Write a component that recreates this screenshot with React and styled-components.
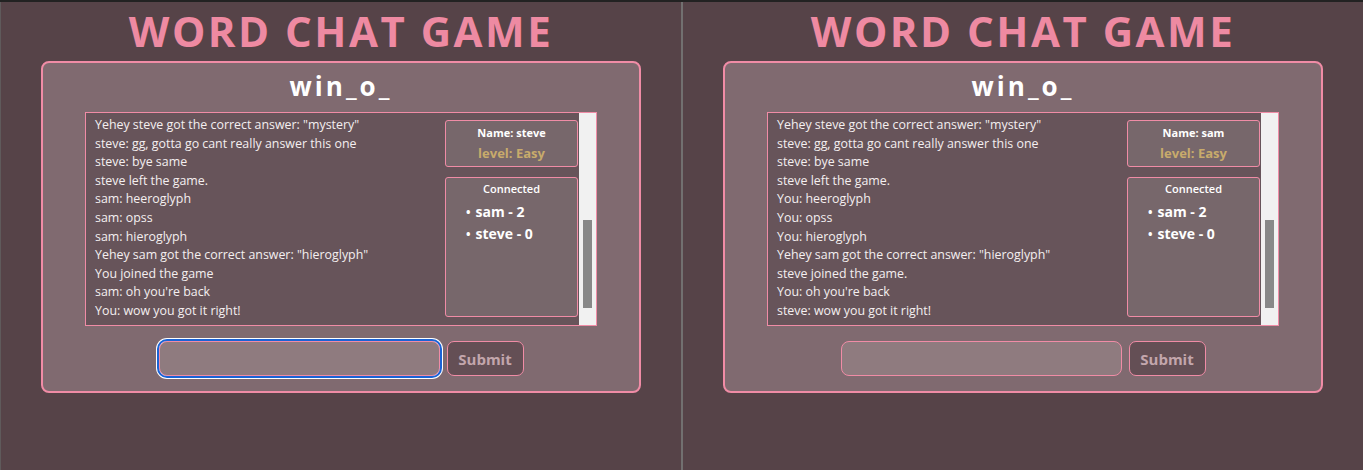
import styled, { createGlobalStyle } from "styled-components";

const GlobalStyle = createGlobalStyle`
  html, body {
    margin: 0;
    padding: 0;
    background-color: #564348;
  }
  body {
    font-family: "Open Sans", "Noto Sans", sans-serif;
    overflow: hidden;
  }
`;

const Screen = styled.div`
  width: 1363px;
  height: 470px;
  display: flex;
  flex-direction: column;
  background-color: #564348;
`;

const TopBar = styled.div`
  height: 2px;
  background-color: #222;
`;

const Windows = styled.div`
  flex: 1;
  display: flex;
`;

const EdgeLine = styled.div`
  width: ${(p) => p.$w}px;
  background-color: ${(p) => p.$color};
`;

const Pane = styled.div`
  flex: 1;
  display: flex;
  flex-direction: column;
  align-items: center;
`;

const Title = styled.h1`
  margin: 1px 0 2px;
  font-size: 42px;
  line-height: 56px;
  font-weight: 700;
  letter-spacing: 2.5px;
  color: #ee8aa2;
`;

const Card = styled.div`
  box-sizing: border-box;
  width: 600px;
  padding: 6px 0 15px;
  display: flex;
  flex-direction: column;
  align-items: center;
  background-color: #806a70;
  border: 2px solid #f08ca6;
  border-radius: 8px;
`;

const RoomName = styled.h2`
  margin: 0 0 9px;
  font-size: 26px;
  line-height: 34px;
  font-weight: 700;
  letter-spacing: 3px;
  color: #fff;
`;

const ChatBox = styled.div`
  box-sizing: border-box;
  width: 512px;
  height: 214px;
  display: flex;
  background-color: #67545a;
  border: 1px solid #f08ca6;
`;

const Messages = styled.div`
  flex: 1;
  padding: 3px 9px 0;
  overflow: hidden;
`;

const Message = styled.div`
  font-size: 12.4px;
  line-height: 18.6px;
  color: #f4eff0;
  white-space: nowrap;
`;

const Sidebar = styled.div`
  width: 133px;
  padding: 7px 0 8px;
  margin-right: 1px;
  display: flex;
  flex-direction: column;
  gap: 10px;
`;

const InfoBox = styled.div`
  box-sizing: border-box;
  height: ${(p) => (p.$grow ? "auto" : "47px")};
  flex: ${(p) => (p.$grow ? 1 : "none")};
  padding: ${(p) => (p.$grow ? "2px 0 0" : "3px 0 0")};
  background-color: #77676b;
  border: 1px solid #f08ca6;
  border-radius: 3px;
  text-align: center;
`;

const SmallLabel = styled.div`
  font-size: 11px;
  line-height: 17px;
  font-weight: ${(p) => (p.$bold ? 700 : 600)};
  color: #fff;
`;

const Level = styled.div`
  font-size: 13px;
  line-height: 24px;
  font-weight: 700;
  color: #c8ab6b;
`;

const PlayerList = styled.ul`
  margin: 4px 0 0;
  padding: 0 0 0 20px;
  list-style: none;
  text-align: left;

  li {
    font-size: 14px;
    line-height: 21px;
    font-weight: 700;
    color: #fff;
  }
  li::before {
    content: "•";
    font-size: 12px;
    margin-right: 5px;
  }
`;

const ScrollTrack = styled.div`
  width: 17px;
  padding-bottom: 17px;
  box-sizing: border-box;
  display: flex;
  flex-direction: column;
  justify-content: flex-end;
  align-items: center;
  background-color: #f1f1f1;
`;

const ScrollThumb = styled.div`
  width: 9px;
  height: 88px;
  background-color: #888;
`;

const InputRow = styled.div`
  margin-top: 15px;
  display: flex;
  gap: 7px;
`;

const TextInput = styled.input`
  box-sizing: border-box;
  width: 281px;
  height: 35px;
  padding: 0 10px;
  background-color: #8f7b7f;
  border: 1px solid #f08ca6;
  border-radius: 8px;
  font-family: inherit;
  font-size: 14px;
  color: #fff;
  outline: ${(p) => (p.$focused ? "2px solid #1a63d6" : "none")};
  box-shadow: ${(p) => (p.$focused ? "0 0 0 3px #ffffff" : "none")};
`;

const SubmitButton = styled.button`
  box-sizing: border-box;
  width: 77px;
  height: 35px;
  padding: 0;
  background-color: #644f55;
  border: 1px solid #f08ca6;
  border-radius: 7px;
  font-family: inherit;
  font-size: 15px;
  font-weight: 700;
  color: #c3a6ac;
`;

const players = ["sam - 2", "steve - 0"];

const leftMessages = [
  'Yehey steve got the correct answer: "mystery"',
  "steve: gg, gotta go cant really answer this one",
  "steve: bye same",
  "steve left the game.",
  "sam: heeroglyph",
  "sam: opss",
  "sam: hieroglyph",
  'Yehey sam got the correct answer: "hieroglyph"',
  "You joined the game",
  "sam: oh you're back",
  "You: wow you got it right!",
];

const rightMessages = [
  'Yehey steve got the correct answer: "mystery"',
  "steve: gg, gotta go cant really answer this one",
  "steve: bye same",
  "steve left the game.",
  "You: heeroglyph",
  "You: opss",
  "You: hieroglyph",
  'Yehey sam got the correct answer: "hieroglyph"',
  "steve joined the game.",
  "You: oh you're back",
  "steve: wow you got it right!",
];

function GameWindow({ name, messages, focused }) {
  return (
    <Pane>
      <Title>WORD CHAT GAME</Title>
      <Card>
        <RoomName>win_o_</RoomName>
        <ChatBox>
          <Messages>
            {messages.map((m, i) => (
              <Message key={i}>{m}</Message>
            ))}
          </Messages>
          <Sidebar>
            <InfoBox>
              <SmallLabel $bold>Name: {name}</SmallLabel>
              <Level>level: Easy</Level>
            </InfoBox>
            <InfoBox $grow>
              <SmallLabel>Connected</SmallLabel>
              <PlayerList>
                {players.map((p) => (
                  <li key={p}>{p}</li>
                ))}
              </PlayerList>
            </InfoBox>
          </Sidebar>
          <ScrollTrack>
            <ScrollThumb />
          </ScrollTrack>
        </ChatBox>
        <InputRow>
          <TextInput type="text" $focused={focused} />
          <SubmitButton>Submit</SubmitButton>
        </InputRow>
      </Card>
    </Pane>
  );
}

export default function App() {
  return (
    <Screen>
      <GlobalStyle />
      <TopBar />
      <Windows>
        <EdgeLine $w={1} $color="#5f5a5b" />
        <GameWindow name="steve" messages={leftMessages} focused />
        <EdgeLine $w={2} $color="#727070" />
        <GameWindow name="sam" messages={rightMessages} />
      </Windows>
    </Screen>
  );
}
